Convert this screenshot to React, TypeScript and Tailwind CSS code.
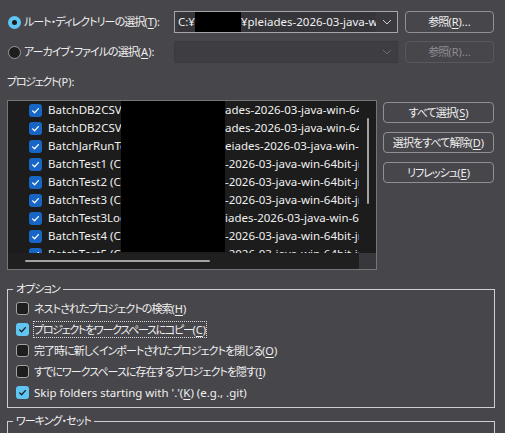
import React from 'react';

const FONT = "[font-family:'Noto_Sans','Noto_Sans_CJK_JP',sans-serif] [font-feature-settings:'palt']";

// Japanese text: Yu Gothic UI is narrower than Noto CJK, so tighten it
const J: React.FC<{ children: React.ReactNode; tight?: boolean }> = ({ children, tight }) => (
    <span className={tight ? 'text-[11px] tracking-[-1.3px]' : 'text-[11px] tracking-[-0.95px]'}>{children}</span>
);

// label with mnemonic: "テキスト(K)"
const L: React.FC<{ jp: string; k: string; after?: string; plain?: boolean; tight?: boolean }> = ({ jp, k, after = '', plain, tight }) => (
    <span>
        <J tight={tight}>{jp}</J>
        <span className="text-[11px]">({plain ? k : <u className="underline underline-offset-2 decoration-1">{k}</u>}){after}</span>
    </span>
);

const CheckMark: React.FC<{ color: string }> = ({ color }) => (
    <svg width="13" height="13" viewBox="0 0 13 13" fill="none">
        <path d="M3.6 6.9 L5.6 8.8 L9.4 4.6" stroke={color} strokeWidth="1.3" strokeLinecap="round" strokeLinejoin="round" />
    </svg>
);

const ListCheck: React.FC = () => (
    <span className="w-[13px] h-[13px] rounded-[3px] bg-[#1766c6] flex items-center justify-center shrink-0">
        <CheckMark color="#ffffff" />
    </span>
);

const OptCheck: React.FC<{ checked?: boolean }> = ({ checked }) =>
    checked ? (
        <span className="w-[13px] h-[13px] rounded-[3px] bg-[#5fc5f3] flex items-center justify-center shrink-0">
            <CheckMark color="#1b1b1b" />
        </span>
    ) : (
        <span className="w-[13px] h-[13px] rounded-[3px] bg-[#1e1e1e] border border-[#a2a2a2] shrink-0" />
    );

const Radio: React.FC<{ selected?: boolean }> = ({ selected }) =>
    selected ? (
        <span className="w-[13px] h-[13px] rounded-full bg-[#5fc5f3] flex items-center justify-center shrink-0">
            <span className="w-[5px] h-[5px] rounded-full bg-[#1b1b1b]" />
        </span>
    ) : (
        <span className="w-[13px] h-[13px] rounded-full bg-[#1e1e1e] border border-[#9a9a9a] shrink-0" />
    );

const Chevron: React.FC<{ color: string }> = ({ color }) => (
    <svg width="10" height="6" viewBox="0 0 10 6" fill="none">
        <path d="M1 1 L5 5 L9 1" stroke={color} strokeWidth="1" />
    </svg>
);

const projects: [string, string][] = [
    ['BatchDB2CSV1 (C:¥Users¥', 'ades-2026-03-java-win-64bit-jre¥workspace¥BatchDB2CSV1)'],
    ['BatchDB2CSV2 (C:¥Users¥', 'ades-2026-03-java-win-64bit-jre¥workspace¥BatchDB2CSV2)'],
    ['BatchJarRunTest (C:¥Users', 'eiades-2026-03-java-win-64bit-jre¥workspace)'],
    ['BatchTest1 (C:¥Users¥', '-2026-03-java-win-64bit-jre¥workspace¥BatchTest1)'],
    ['BatchTest2 (C:¥Users¥', '-2026-03-java-win-64bit-jre¥workspace¥BatchTest2)'],
    ['BatchTest3 (C:¥Users¥', '-2026-03-java-win-64bit-jre¥workspace¥BatchTest3)'],
    ['BatchTest3Local (C:¥', 'iades-2026-03-java-win-64bit-jre¥workspace)'],
    ['BatchTest4 (C:¥Users¥', '-2026-03-java-win-64bit-jre¥workspace¥BatchTest4)'],
    ['BatchTest5 (C:¥Users¥', '-2026-03-java-win-64bit-jre¥workspace¥BatchTest5)'],
];

const SideButton: React.FC<{ children: React.ReactNode }> = ({ children }) => (
    <button className="h-[21px] w-full rounded-[4px] border border-[#8f8f94] text-[#f0f0f0] flex items-center justify-center">
        {children}
    </button>
);

export default function App() {
    return (
        <div className={`w-[505px] h-[433px] overflow-hidden whitespace-nowrap bg-[#47464b] text-[#f0f0f0] text-[11.5px] leading-[18px] ${FONT}`}>
            {/* root directory */}
            <div className="flex items-center h-[22px] mt-[11px] pl-[8px]">
                <div className="w-[166px] flex items-center gap-[3px]">
                    <Radio selected />
                    <L jp="ルート・ディレクトリーの選択" k="T" after=":" />
                </div>
                <div className="w-[224px] h-[22px] border border-[#a5a5a8] bg-[#3b3a3f] flex items-center pl-[3px] pr-[5px]">
                    <div className="flex-1 flex items-center h-full overflow-hidden bg-[#36353a]">
                        <span>C:¥</span>
                        <span className="inline-block w-[46px] h-full bg-black shrink-0" />
                        <span>¥pleiades-2026-03-java-win-64bit</span>
                    </div>
                    <span className="pl-[6px]"><Chevron color="#d0d0d0" /></span>
                </div>
                <button className="ml-[7px] w-[89px] h-[22px] rounded-[4px] border border-[#8f8f94] flex items-center justify-center">
                    <L jp="参照" k="R" after="..." />
                </button>
            </div>

            {/* archive file */}
            <div className="flex items-center h-[22px] mt-[8px] pl-[8px]">
                <div className="w-[166px] flex items-center gap-[3px]">
                    <Radio />
                    <L jp="アーカイブ・ファイルの選択" k="A" after=":" />
                </div>
                <div className="w-[224px] h-[22px] border border-[#3a393e] bg-[#3e3d42] flex items-center justify-end pr-[5px]">
                    <Chevron color="#6d6c71" />
                </div>
                <button className="ml-[7px] w-[89px] h-[22px] rounded-[4px] border border-[#59585d] text-[#8e8d92] flex items-center justify-center">
                    <L jp="参照" k="R" after="..." plain />
                </button>
            </div>

            <div className="mt-[10px] pl-[7px] h-[18px]"><L jp="プロジェクト" k="P" after=":" plain tight /></div>

            {/* project list + buttons */}
            <div className="flex mt-[9px] pl-[7px]">
                <div className="w-[370px] h-[170px] border border-[#76757a] bg-[#1c1c1c] flex flex-col">
                    <div className="flex flex-1 min-h-0">
                        <div className="relative flex-1 overflow-hidden">
                            {projects.map(([left, right], i) => (
                                <div key={i} className="h-[18px] flex items-center pl-[21px]">
                                    <ListCheck />
                                    <span className="ml-[6px] w-[73px] overflow-hidden shrink-0">{left}</span>
                                    <span className="w-[104px] shrink-0" />
                                    <span>{right}</span>
                                </div>
                            ))}
                            <div className="absolute left-[113px] top-0 w-[104px] h-[151px] bg-black" />
                        </div>
                        <div className="w-[17px] flex justify-center pt-[17px]">
                            <div className="w-[2px] h-[86px] bg-[#a3a3a3] rounded-full" />
                        </div>
                    </div>
                    <div className="flex h-[16px]">
                        <div className="flex-1 bg-[#1f1f1f] flex items-center pl-[17px]">
                            <div className="w-[185px] h-[2px] bg-[#a3a3a3] rounded-full" />
                        </div>
                        <div className="w-[17px] bg-[#38373b]" />
                    </div>
                </div>
                <div className="ml-[6px] w-[111px] flex flex-col gap-[9px] pt-[2px]">
                    <SideButton><L jp="すべて選択" k="S" /></SideButton>
                    <SideButton><L jp="選択をすべて解除" k="D" /></SideButton>
                    <SideButton><L jp="リフレッシュ" k="E" /></SideButton>
                </div>
            </div>

            {/* options */}
            <fieldset className="mt-[10px] ml-[7px] w-[488px] border border-[#cfcfd2] pl-[8px] pb-[4px]">
                <legend className="ml-[-3px] px-[3px] h-[18px]"><J>オプション</J></legend>
                <div className="flex items-center gap-[5px] h-[21px]">
                    <OptCheck />
                    <L jp="ネストされたプロジェクトの検索" k="H" />
                </div>
                <div className="flex items-center gap-[5px] h-[21px]">
                    <OptCheck checked />
                    <span className="outline outline-1 outline-dotted outline-[#d8d8d8] leading-[15px]">
                        <L jp="プロジェクトをワークスペースにコピー" k="C" tight />
                    </span>
                </div>
                <div className="flex items-center gap-[5px] h-[21px]">
                    <OptCheck />
                    <L jp="完了時に新しくインポートされたプロジェクトを閉じる" k="O" />
                </div>
                <div className="flex items-center gap-[5px] h-[21px]">
                    <OptCheck />
                    <L jp="すでにワークスペースに存在するプロジェクトを隠す" k="I" />
                </div>
                <div className="flex items-center gap-[5px] h-[21px]">
                    <OptCheck checked />
                    <span>Skip folders starting with '.'(<u className="underline underline-offset-2 decoration-1">K</u>) (e.g., .git)</span>
                </div>
            </fieldset>

            {/* working set */}
            <fieldset className="mt-[4px] ml-[7px] w-[488px] border border-[#cfcfd2] pl-[8px] h-[60px]">
                <legend className="ml-[-3px] px-[3px] h-[18px]"><J>ワーキング・セット</J></legend>
            </fieldset>
        </div>
    );
}
